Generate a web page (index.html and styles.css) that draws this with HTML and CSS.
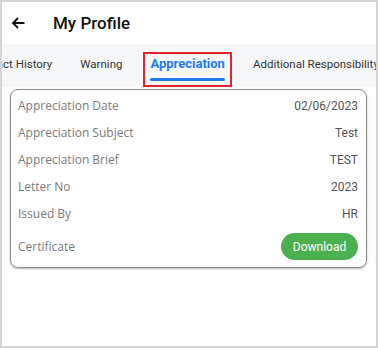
FILE: index.html
```html
<!DOCTYPE html>
<html>
<head>
  <title>My Profile</title>
  <link rel="stylesheet" href="styles.css">
</head>
<body>
  <div class="screen">
    <div class="header">
      <svg class="back" width="14" height="12" viewBox="0 0 14 12">
        <path d="M13.5 6H2 M7 1L2 6l5 5" fill="none" stroke="#111" stroke-width="1.8"/>
      </svg>
      <h1>My Profile</h1>
    </div>

    <div class="tabs">
      <div class="strip">
        <div class="tab"><span>Contract History</span><i></i></div>
        <div class="tab"><span>Warning</span><i></i></div>
        <div class="tab active"><span>Appreciation</span><i></i></div>
        <div class="tab"><span>Additional Responsibility</span><i></i></div>
      </div>
    </div>

    <div class="card">
      <div class="row"><span class="label">Appreciation Date</span><span class="value">02/06/2023</span></div>
      <div class="row"><span class="label">Appreciation Subject</span><span class="value">Test</span></div>
      <div class="row"><span class="label">Appreciation Brief</span><span class="value">TEST</span></div>
      <div class="row"><span class="label">Letter No</span><span class="value">2023</span></div>
      <div class="row"><span class="label">Issued By</span><span class="value">HR</span></div>
      <div class="row cert"><span class="label">Certificate</span><button class="download">Download</button></div>
    </div>
  </div>
</body>
</html>
```

FILE: styles.css
```css
body {
  margin: 0;
  font-family: Roboto, "Liberation Sans", sans-serif;
  background: #fff;
}

.screen {
  width: 378px;
  height: 348px;
  box-sizing: border-box;
  border: 2px solid #d4d4d4;
  overflow: hidden;
}

.header {
  height: 42px;
  display: flex;
  align-items: center;
}

.back {
  margin-left: 9px;
}

h1 {
  margin: 0 0 0 28px;
  font-size: 17px;
  font-weight: 500;
  color: #111;
}

.tabs {
  background: #f6f7f9;
  height: 43px;
  padding-top: 8px;
  box-sizing: border-box;
  overflow: hidden;
}

.strip {
  display: flex;
  gap: 14px;
  margin-left: -40px;
  white-space: nowrap;
}

.tab {
  height: 35px;
  box-sizing: border-box;
  padding: 4px 7px 0;
  display: flex;
  flex-direction: column;
  font-size: 11.5px;
  line-height: 16px;
  color: #333;
}

.tab i {
  display: block;
  height: 3px;
  margin-top: 6px;
  border-radius: 2px;
}

.tab.active {
  outline: 2px solid #e0252b;
  outline-offset: -2px;
  color: #1d7af0;
  font-size: 13px;
  font-weight: bold;
}

.tab.active i {
  background: #1d7af0;
}

.card {
  margin: 2px 9px 0 8px;
  border: 1px solid #8c8c8c;
  border-radius: 8px;
  box-shadow: 0 1px 2px rgba(0, 0, 0, 0.3);
  padding: 2px 8px 7px 7px;
}

.row {
  height: 27px;
  display: flex;
  align-items: center;
  justify-content: space-between;
}

.label {
  font-family: "Open Sans", sans-serif;
  font-size: 12px;
  color: #7a7a7a;
}

.value {
  font-size: 12px;
  color: #555;
}

.row.cert {
  margin-top: 6px;
}

.download {
  width: 77px;
  height: 27px;
  border: none;
  border-radius: 14px;
  background: #4caf50;
  color: #fff;
  font-family: Roboto, sans-serif;
  font-size: 12px;
}
```
